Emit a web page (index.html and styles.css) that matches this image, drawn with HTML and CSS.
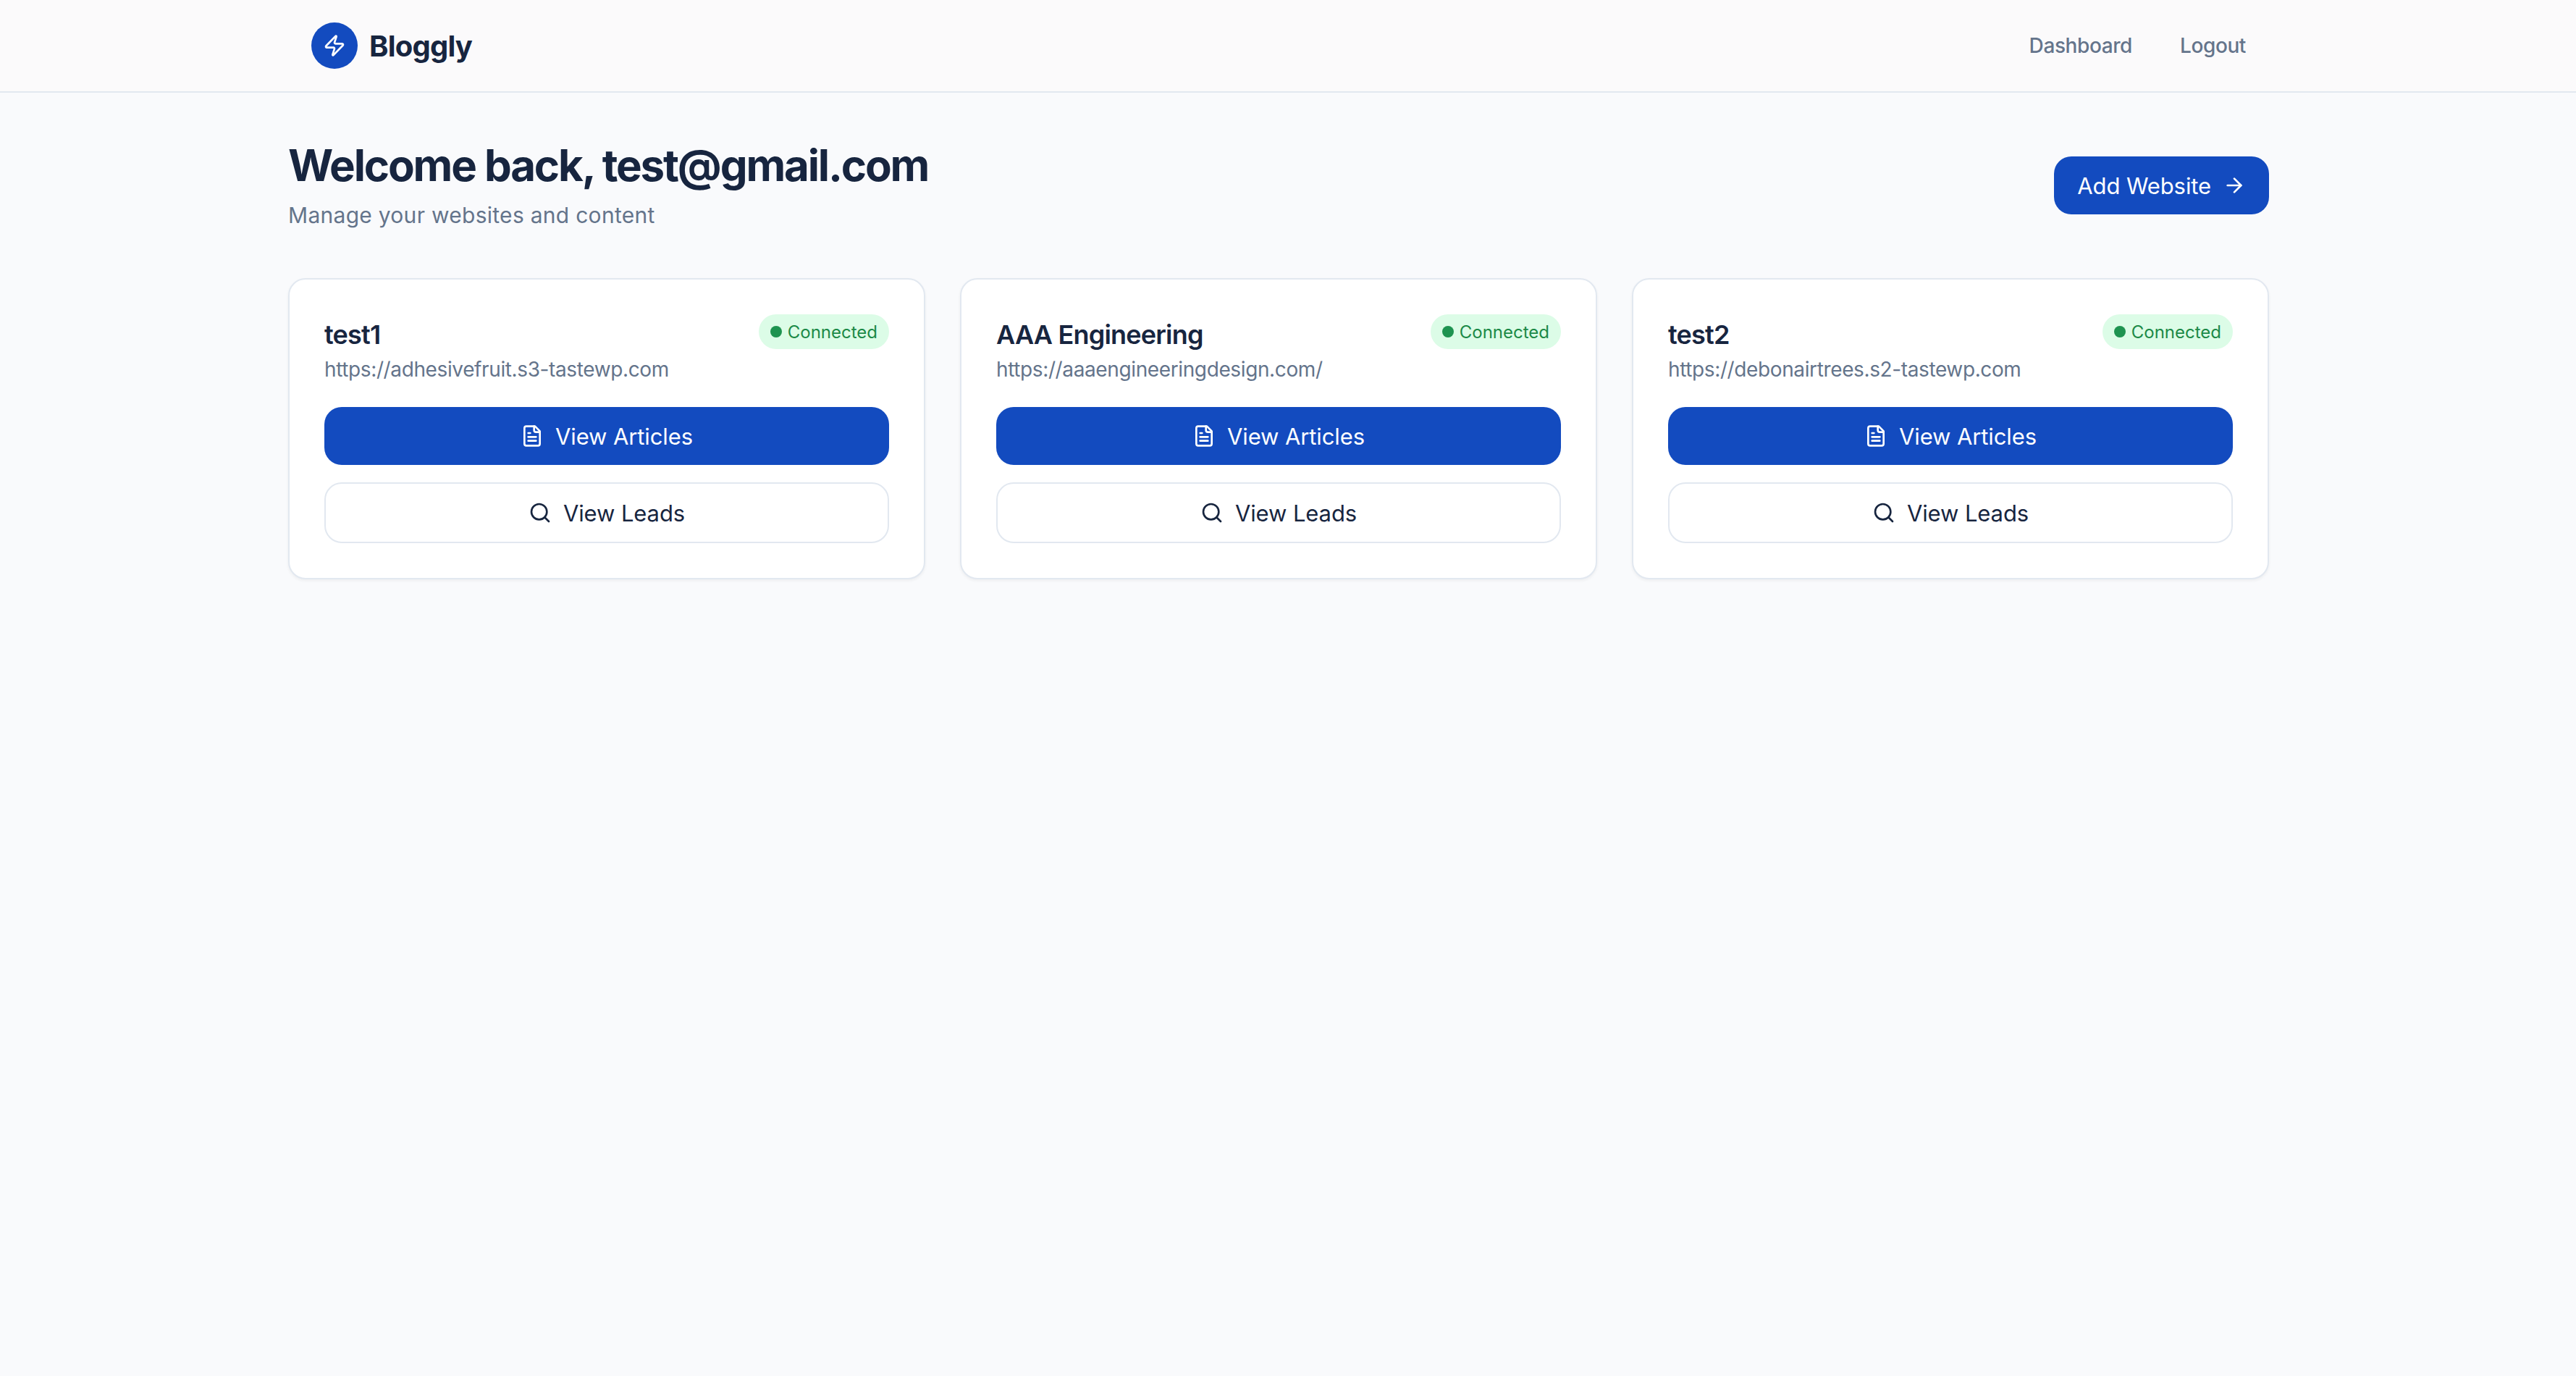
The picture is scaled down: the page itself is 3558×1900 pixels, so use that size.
FILE: index.html
```html
<!DOCTYPE html>
<html lang="en">
<head>
  <meta charset="UTF-8" />
  <title>Bloggly</title>
  <link rel="stylesheet" href="styles.css">
</head>
<body>
  <header class="topbar">
    <div class="topbar-inner">
      <a class="brand" href="#">
        <span class="brand-icon">
          <svg class="icon" viewBox="0 0 24 24"><path d="M4 14a1 1 0 0 1-.78-1.63l9.9-10.2a.5.5 0 0 1 .86.46l-1.92 6.02A1 1 0 0 0 13 10h7a1 1 0 0 1 .78 1.63l-9.9 10.2a.5.5 0 0 1-.86-.46l1.92-6.02A1 1 0 0 0 11 14z"/></svg>
        </span>
        <span class="brand-name">Bloggly</span>
      </a>
      <nav class="nav">
        <a href="#">Dashboard</a>
        <a href="#">Logout</a>
      </nav>
    </div>
  </header>

  <main class="content">
    <div class="page-head">
      <div>
        <h1>Welcome back, test@gmail.com</h1>
        <p class="subtitle">Manage your websites and content</p>
      </div>
      <a class="btn btn-primary btn-add" href="#">
        Add Website
        <svg class="icon" viewBox="0 0 24 24"><path d="M5 12h14"/><path d="m12 5 7 7-7 7"/></svg>
      </a>
    </div>

    <div class="cards">
      <!-- one card per site -->
      <section class="card">
        <div class="card-head">
          <div>
            <h2>test1</h2>
            <p class="url">https://adhesivefruit.s3-tastewp.com</p>
          </div>
          <span class="badge"><i class="dot"></i>Connected</span>
        </div>
        <a class="btn btn-primary" href="#">
          <svg class="icon" viewBox="0 0 24 24"><path d="M15 2H6a2 2 0 0 0-2 2v16a2 2 0 0 0 2 2h12a2 2 0 0 0 2-2V7Z"/><path d="M14 2v4a2 2 0 0 0 2 2h4"/><path d="M10 9H8"/><path d="M16 13H8"/><path d="M16 17H8"/></svg>
          View Articles
        </a>
        <a class="btn btn-outline" href="#">
          <svg class="icon" viewBox="0 0 24 24"><circle cx="11" cy="11" r="8"/><path d="m21 21-4.3-4.3"/></svg>
          View Leads
        </a>
      </section>

      <section class="card">
        <div class="card-head">
          <div>
            <h2>AAA Engineering</h2>
            <p class="url">https://aaaengineeringdesign.com/</p>
          </div>
          <span class="badge"><i class="dot"></i>Connected</span>
        </div>
        <a class="btn btn-primary" href="#">
          <svg class="icon" viewBox="0 0 24 24"><path d="M15 2H6a2 2 0 0 0-2 2v16a2 2 0 0 0 2 2h12a2 2 0 0 0 2-2V7Z"/><path d="M14 2v4a2 2 0 0 0 2 2h4"/><path d="M10 9H8"/><path d="M16 13H8"/><path d="M16 17H8"/></svg>
          View Articles
        </a>
        <a class="btn btn-outline" href="#">
          <svg class="icon" viewBox="0 0 24 24"><circle cx="11" cy="11" r="8"/><path d="m21 21-4.3-4.3"/></svg>
          View Leads
        </a>
      </section>

      <section class="card">
        <div class="card-head">
          <div>
            <h2>test2</h2>
            <p class="url">https://debonairtrees.s2-tastewp.com</p>
          </div>
          <span class="badge"><i class="dot"></i>Connected</span>
        </div>
        <a class="btn btn-primary" href="#">
          <svg class="icon" viewBox="0 0 24 24"><path d="M15 2H6a2 2 0 0 0-2 2v16a2 2 0 0 0 2 2h12a2 2 0 0 0 2-2V7Z"/><path d="M14 2v4a2 2 0 0 0 2 2h4"/><path d="M10 9H8"/><path d="M16 13H8"/><path d="M16 17H8"/></svg>
          View Articles
        </a>
        <a class="btn btn-outline" href="#">
          <svg class="icon" viewBox="0 0 24 24"><circle cx="11" cy="11" r="8"/><path d="m21 21-4.3-4.3"/></svg>
          View Leads
        </a>
      </section>
    </div>
  </main>
</body>
</html>
```

FILE: styles.css
```css
* {
  box-sizing: border-box;
}

html,
body {
  height: 100%;
}

body {
  margin: 0;
  background-color: #f9fafc;
  color: #17253f;
  font-family: Inter, "Liberation Sans", sans-serif;
}

a {
  text-decoration: none;
  color: inherit;
}

.icon {
  width: 32px;
  height: 32px;
  flex: none;
  fill: none;
  stroke: currentColor;
  stroke-width: 2;
  stroke-linecap: round;
  stroke-linejoin: round;
}

.topbar {
  height: 128px;
  padding-right: 26px;
  background-color: #fbfafb;
  border-bottom: 2px solid #e2e8f0;
}

.topbar-inner {
  width: 2736px;
  height: 126px;
  margin: 0 auto;
  padding: 0 32px;
  display: flex;
  align-items: center;
  justify-content: space-between;
}

.brand {
  display: flex;
  align-items: center;
  gap: 16px;
}

.brand-icon {
  width: 64px;
  height: 64px;
  display: flex;
  align-items: center;
  justify-content: center;
  border-radius: 50%;
  background-color: #134bbf;
  color: #fff;
}

.brand-name {
  font-size: 40px;
  font-weight: 700;
  letter-spacing: -0.8px;
}

.nav {
  display: flex;
  gap: 66px;
  font-size: 28px;
  font-weight: 500;
  letter-spacing: -0.4px;
  color: #64748b;
}

.content {
  padding: 64px 26px 0 0;
}

.page-head {
  width: 2736px;
  margin: 0 auto 64px;
  display: flex;
  align-items: center;
  justify-content: space-between;
}

h1 {
  margin: 0 0 10px;
  font-size: 60px;
  line-height: 72px;
  font-weight: 700;
  letter-spacing: -2.15px;
}

.subtitle {
  margin: 0;
  font-size: 30px;
  line-height: 46px;
  letter-spacing: 0.28px;
  color: #64748b;
}

.cards {
  width: 2736px;
  margin: 0 auto;
  display: grid;
  grid-template-columns: repeat(3, 1fr);
  gap: 48px;
}

.card {
  padding: 48px;
  display: flex;
  flex-direction: column;
  gap: 24px;
  background-color: #fff;
  border: 2px solid #e2e8f0;
  border-radius: 24px;
  box-shadow: 0 2px 4px #0000000d;
}

.card-head {
  margin-bottom: 8px;
  display: flex;
  align-items: flex-start;
  justify-content: space-between;
}

h2 {
  margin: 8px 0 0;
  font-size: 36px;
  line-height: 40px;
  font-weight: 600;
  letter-spacing: -0.8px;
}

.url {
  margin: 8px 0 0;
  font-size: 28px;
  line-height: 40px;
  letter-spacing: -0.38px;
  color: #64748b;
}

.badge {
  height: 48px;
  padding: 0 16px;
  display: flex;
  align-items: center;
  gap: 8px;
  border-radius: 24px;
  background-color: #dcfce7;
  color: #1c8a47;
  font-size: 24px;
  font-weight: 400;
}

.dot {
  width: 16px;
  height: 16px;
  border-radius: 50%;
  background-color: #1e9350;
}

.btn {
  height: 80px;
  display: flex;
  align-items: center;
  justify-content: center;
  gap: 16px;
  border-radius: 24px;
  font-size: 31px;
  font-weight: 400;
  letter-spacing: -0.1px;
}

.btn-primary {
  background-color: #134bbf;
  color: #fff;
}

.btn-outline {
  height: 84px;
  background-color: #fff;
  border: 2px solid #e2e8f0;
}

.btn-add {
  padding: 0 32px;
}
```
